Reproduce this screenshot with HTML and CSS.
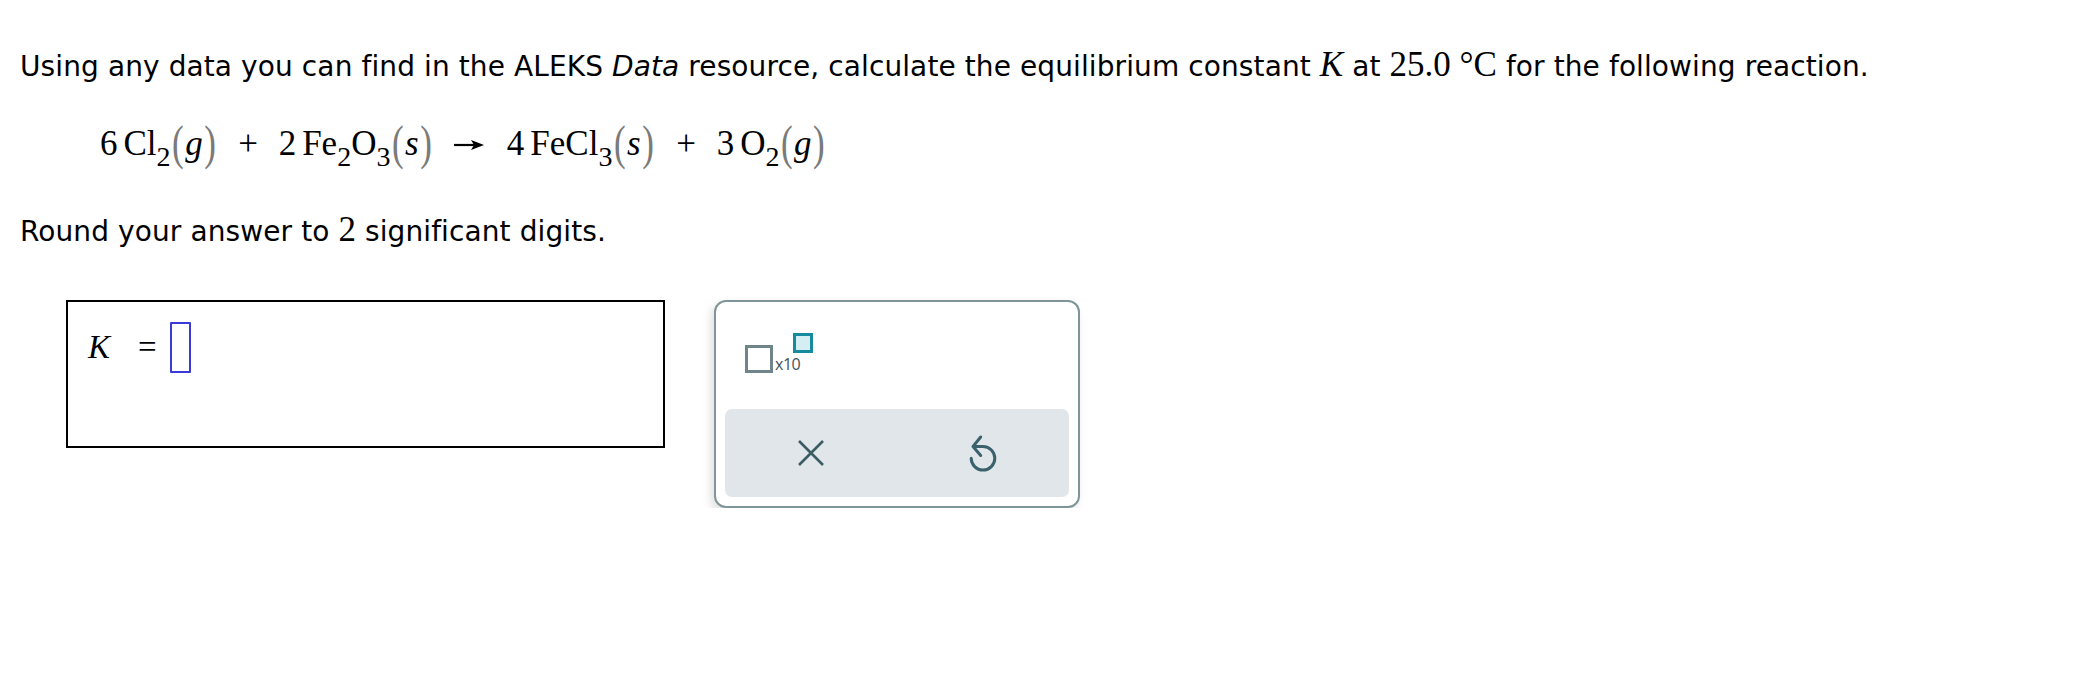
FILE: index.html
```html
<!DOCTYPE html>
<html lang="en">
<head>
<meta charset="utf-8">
<title>ALEKS question</title>
<link rel="stylesheet" href="styles.css">
</head>
<body>
<main class="page">
  <p class="prompt first">Using any data you can find in the ALEKS <i>Data</i> resource, calculate the equilibrium constant <span class="math"><i>K</i></span> at <span class="math">25.0&nbsp;°C</span> for the following reaction.</p>

  <div class="equation">
    <span>6</span><span class="thin"></span><span>Cl</span><sub class="sub">2</sub><span class="paren">(</span><i>g</i><span class="paren">)</span>
    <span class="op">+</span>
    <span>2</span><span class="thin"></span><span>Fe</span><sub class="sub">2</sub><span>O</span><sub class="sub">3</sub><span class="paren">(</span><i>s</i><span class="paren">)</span>
    <span class="arrow"><svg width="30" height="12" viewBox="0 0 30 12"><line x1="0" y1="6" x2="20" y2="6" stroke="#000" stroke-width="2.2"/><polygon points="17,1 30,6 17,11 20,6" fill="#000"/></svg></span>
    <span>4</span><span class="thin"></span><span>FeCl</span><sub class="sub">3</sub><span class="paren">(</span><i>s</i><span class="paren">)</span>
    <span class="op">+</span>
    <span>3</span><span class="thin"></span><span>O</span><sub class="sub">2</sub><span class="paren">(</span><i>g</i><span class="paren">)</span>
  </div>

  <p class="prompt round">Round your answer to <span class="math">2</span> significant digits.</p>

  <div class="answer-row">
    <div class="answer-box">
      <div class="answer-line">
        <i class="k-var">K</i>
        <span class="equals">=</span>
        <span class="slot"></span>
      </div>
    </div>

    <div class="tool-panel">
      <div class="tool-top">
        <button class="sci" type="button" aria-label="scientific notation">
          <span class="base-box"></span>
          <span class="times">x10</span>
          <span class="exp-box"></span>
        </button>
      </div>
      <div class="tool-actions">
        <button class="action" type="button" aria-label="clear">
          <svg width="26" height="26" viewBox="0 0 26 26"><path d="M1 1 L25 25 M25 1 L1 25" stroke="#3b5c65" stroke-width="2.6" fill="none"/></svg>
        </button>
        <button class="action" type="button" aria-label="undo">
          <svg width="36" height="42" viewBox="0 0 36 42"><path d="M15.7 5 L8 14.5 L15.7 23.5 M8 14.5 H18 A11.8 11.8 0 1 1 6.2 26.3" stroke="#3b626c" stroke-width="3" fill="none" stroke-linecap="round" stroke-linejoin="round"/></svg>
        </button>
      </div>
    </div>
  </div>
</main>
</body>
</html>
```

FILE: styles.css
```css
html, body {
  margin: 0;
  padding: 0;
  background: #ffffff;
}

.page {
  padding-left: 20px;
  font-family: "DejaVu Sans", Verdana, sans-serif;
  color: #000;
}

.prompt {
  margin: 0;
  font-size: 28px;
  line-height: 34px;
  letter-spacing: 0.1px;
}

.prompt.first {
  padding-top: 50px;
}

.prompt.round {
  margin-top: 45px;
}

.math {
  font-family: "Liberation Serif", "Times New Roman", serif;
  font-size: 1.25em;
  line-height: 20px;
  letter-spacing: 0;
}

.equation {
  margin: 26px 0 0 80px;
  font-family: "Liberation Serif", "Times New Roman", serif;
  font-size: 35px;
  line-height: 60px;
  height: 60px;
  white-space: nowrap;
}

.thin {
  display: inline-block;
  width: 6px;
}

.sub {
  font-size: 0.8em;
  vertical-align: -0.4em;
  line-height: 0;
}

.paren {
  display: inline-block;
  color: #7a7a7a;
  transform: scaleY(1.4);
  margin: 0 1.5px;
}

.equation i {
  font-family: "Liberation Serif", "Times New Roman", serif;
  font-style: italic;
}

.op {
  margin: 0 12px;
}

.arrow {
  display: inline-block;
  margin: 0 14px 0 12px;
  vertical-align: 4px;
}

.answer-row {
  margin-top: 51px;
  margin-left: 46px;
  display: flex;
  align-items: flex-start;
  gap: 49px;
}

.answer-box {
  box-sizing: border-box;
  width: 599px;
  height: 148px;
  border: 2px solid #000;
  padding: 20px 0 0 20px;
}

.answer-line {
  display: flex;
  align-items: center;
  height: 51px;
  font-family: "Liberation Serif", "Times New Roman", serif;
  font-size: 33px;
}

.k-var {
  font-style: italic;
}

.equals {
  margin-left: 28px;
  margin-right: 13px;
}

.slot {
  box-sizing: border-box;
  width: 21px;
  height: 51px;
  border: 2px solid #3a3ad8;
  border-radius: 1px;
}

.tool-panel {
  box-sizing: border-box;
  width: 366px;
  height: 208px;
  border: 2px solid #7f9598;
  border-radius: 12px;
  background: #fff;
  box-shadow: -3px 4px 10px rgba(0, 0, 0, 0.13);
  display: flex;
  flex-direction: column;
}

.tool-top {
  height: 107px;
  box-sizing: border-box;
  padding: 31px 0 0 29px;
}

.sci {
  display: flex;
  align-items: flex-end;
  height: 40px;
  padding: 0;
  border: 0;
  background: none;
  cursor: pointer;
}

.base-box {
  box-sizing: border-box;
  width: 28px;
  height: 28px;
  border: 3px solid #6f858a;
}

.times {
  font-family: "Open Sans", Lato, sans-serif;
  font-size: 16px;
  line-height: 16px;
  color: #3f5258;
  margin-left: 2px;
  margin-bottom: 1px;
  letter-spacing: -0.5px;
}

.exp-box {
  align-self: flex-start;
  box-sizing: border-box;
  width: 20px;
  height: 20px;
  border: 3px solid #178a9d;
  background: #d4eef4;
  margin-left: -7px;
}

.tool-actions {
  margin: 0 9px;
  height: 88px;
  background: #e1e6ea;
  border-radius: 7px;
  display: flex;
}

.action {
  flex: 1;
  display: flex;
  align-items: center;
  justify-content: center;
  border: 0;
  background: none;
  padding: 0;
  cursor: pointer;
}
```
